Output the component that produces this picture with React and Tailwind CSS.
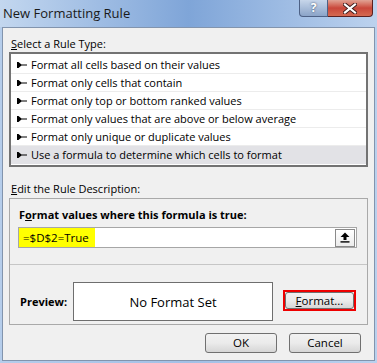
import React from 'react';

const rules = [
  'Format all cells based on their values',
  'Format only cells that contain',
  'Format only top or bottom ranked values',
  'Format only values that are above or below average',
  'Format only unique or duplicate values',
  'Use a formula to determine which cells to format',
];

const RuleGlyph = () => (
  <svg width="10" height="6" viewBox="0 0 10 6" className="shrink-0">
    <polygon points="0,0 1.5,0 4.5,2.5 10,2.5 10,3.5 4.5,3.5 1.5,6 0,6" fill="#000" />
  </svg>
);

const WinButton = ({ children, className = '' }) => (
  <div
    className={`flex items-center justify-center rounded-[3px] border border-[#707070] bg-gradient-to-b from-[#f2f2f2] via-[#ebebeb] to-[#d6d6d6] text-[11.5px] text-black ${className}`}
  >
    {children}
  </div>
);

export default function App() {
  return (
    <div
      className="relative flex h-[363px] w-[377px] flex-col overflow-hidden bg-gradient-to-r from-[#b5cdeb] via-[#a3c0e6] to-[#b9d1ee] text-black"
      style={{ fontFamily: '"Open Sans", "Noto Sans", sans-serif' }}
    >
      {/* title bar */}
      <div className="relative flex h-[27px] shrink-0 items-center bg-gradient-to-r from-[#c3d7ef] via-[#7fa5d8] to-[#bcd2ee] pl-[3px]">
        <span className="text-[13px] leading-none text-[#1a1a1a]">New Formatting Rule</span>
        <div className="absolute right-[4px] top-0 flex h-[17px]">
          <div className="flex w-[29px] items-center justify-center rounded-bl-[4px] border border-t-0 border-[#4d6185] bg-gradient-to-b from-[#c7d6ea] to-[#8ba4c8] text-[12px] font-bold leading-none text-white [text-shadow:0_0_2px_#2a3b5a]">
            ?
          </div>
          <div className="flex w-[45px] items-center justify-center rounded-br-[4px] border border-l-0 border-t-0 border-[#5b2020] bg-gradient-to-b from-[#e0a294] via-[#c9463a] to-[#d46a52]">
            <svg width="14" height="11" viewBox="0 0 14 11">
              <path d="M2 1.5 L12 9.5 M12 1.5 L2 9.5" stroke="#3a1a1a" strokeWidth="4" strokeLinecap="square" />
              <path d="M2 1.5 L12 9.5 M12 1.5 L2 9.5" stroke="#fff" strokeWidth="2.2" strokeLinecap="square" />
            </svg>
          </div>
        </div>
      </div>

      {/* client area */}
      <div className="mx-[2px] flex h-[334px] flex-col border border-[#8294ad] bg-[#f0f0f0] px-[6px] text-[11px] leading-[16px]">
        <div className="mt-[8px] pl-[2px]">
          <span className="underline">S</span>elect a Rule Type:
        </div>

        <div className="mt-[0px] border-2 border-[#737373] bg-white pb-[1px] pt-[2px]">
          {rules.map((r, i) => (
            <div
              key={r}
              className={`flex h-[18px] items-center gap-[4px] border-b pl-[6px] ${
                i === rules.length - 1 ? 'border-transparent bg-[#e2e2e6]' : 'border-[#ececec]'
              }`}
            >
              <RuleGlyph />
              <span className="whitespace-nowrap">{r}</span>
            </div>
          ))}
        </div>

        <div className="mt-[14px] pl-[2px]">
          <span className="underline">E</span>dit the Rule Description:
        </div>

        <div className="mt-[1px] flex h-[127px] flex-col border border-[#a9a9a9]">
          <div className="mt-[8px] pl-[9px] font-bold">
            F<span className="underline">o</span>rmat values where this formula is true:
          </div>
          <div className="ml-[8px] mr-[10px] mt-[4px] flex h-[21px] items-center border border-[#a6a6a6] bg-white">
            <div className="flex h-full w-[76px] items-center bg-[#ffff00] pl-[4px] text-[11.5px]">=$D$2=True</div>
            <div className="flex-1" />
            <div className="mr-[1px] flex h-[18px] w-[20px] items-center justify-center border border-[#8a8a8a] bg-gradient-to-b from-white to-[#ececec]">
              <svg width="10" height="11" viewBox="0 0 10 11">
                <path d="M5 0.5 L9.5 5 L6.5 5 L6.5 8 L3.5 8 L3.5 5 L0.5 5 Z" fill="#000" />
                <rect x="0.5" y="9.2" width="9" height="1.4" fill="#000" />
              </svg>
            </div>
          </div>
          <div className="mt-[16px] h-px bg-[#c6c6c6]" />
          <div className="mt-[17px] flex items-start">
            <div className="mt-[12px] w-[63px] shrink-0 pl-[10px] font-bold">Preview:</div>
            <div className="flex h-[39px] w-[200px] items-center justify-center border border-[#6e6e6e] bg-white text-[13px]">
              No Format Set
            </div>
            <div className="ml-[10px] mt-[8px] h-[21px] w-[73px] border-2 border-[#ee0000] p-0">
              <WinButton className="h-full w-full rounded-[2px]">
                <span className="underline">F</span>ormat...
              </WinButton>
            </div>
          </div>
        </div>

        <div className="mt-[8px] flex justify-end gap-[12px] pr-[7px]">
          <WinButton className="h-[20px] w-[72px]">OK</WinButton>
          <WinButton className="h-[20px] w-[72px]">Cancel</WinButton>
        </div>
      </div>
    </div>
  );
}
